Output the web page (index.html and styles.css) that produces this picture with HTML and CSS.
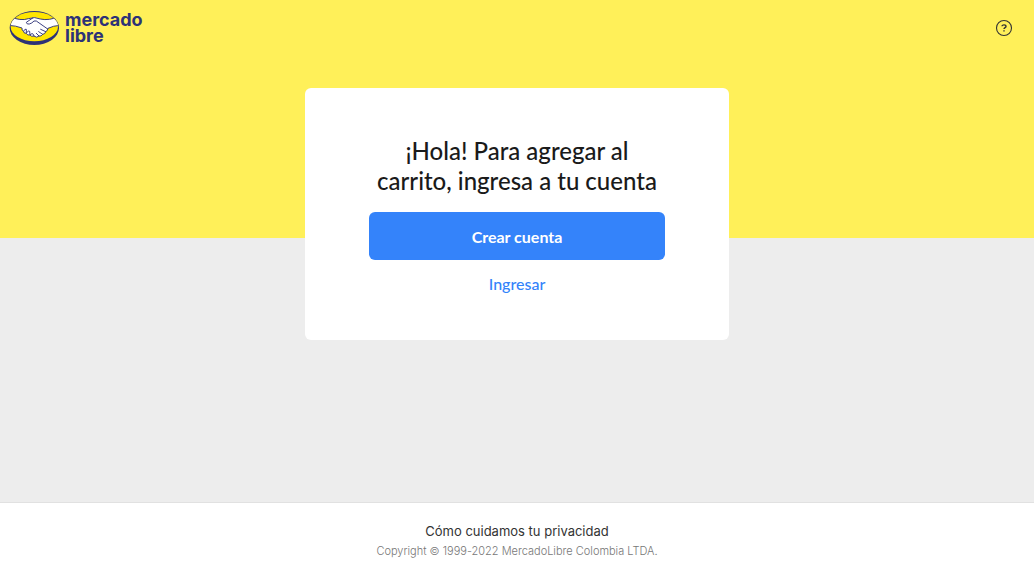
FILE: index.html
```html
<!DOCTYPE html>
<html lang="es">
<head>
<meta charset="utf-8">
<meta name="viewport" content="width=device-width, initial-scale=1">
<title>Mercado Libre</title>
<link rel="stylesheet" href="styles.css">
</head>
<body class="page">
<header class="header">
  <a class="brand" href="#">
    <svg class="brand-mark" viewBox="27 30 153 108" aria-hidden="true">
      <clipPath id="oval"><ellipse cx="103" cy="80" rx="71" ry="44"/></clipPath>
      <ellipse cx="103" cy="84" rx="74" ry="51" fill="#2d3277"/>
      <ellipse cx="103" cy="80" rx="71" ry="44" fill="#ffe600"/>
      <g clip-path="url(#oval)" stroke="#2d3277" stroke-width="2.8" stroke-linecap="round" stroke-linejoin="round">
        <path d="M30 50 Q62 64 85 56 Q104 49 121 57 Q148 63 176 49 L180 76 Q160 77 144 85 Q143 93 137 95 Q136 102 128 103 Q124 110 117 108 Q110 115 102 108 Q94 111 90 105 Q82 107 79 100 Q71 101 71 94 Q64 91 66 84 Q48 77 26 76Z" fill="#fff"/>
        <path d="M98 54 L79 67 Q80 74 88 72 Q96 70 102 63 L109 63 L143 87 M71 93 Q75 85 79 88 L79 99 Q86 90 89 94 L90 105 Q97 97 100 103 L102 108 M122 88 L137 95 M116 95 L128 103 M109 100 L117 108" fill="none"/>
      </g>
    </svg>
    <span class="brand-name">mercado<br>libre</span>
  </a>
  <a class="help" href="#" aria-label="Ayuda">
    <svg class="help-icon" viewBox="0 0 18 18" aria-hidden="true">
      <circle cx="9" cy="9" r="7.5" fill="none" stroke="currentColor" stroke-width="1.1"/>
      <path d="M7 7.3C7 5.4 11 5.4 11 7.4C11 8.7 9 8.6 9 10.1M9 11.3V12.6" fill="none" stroke="currentColor" stroke-width="1.4"/>
    </svg>
  </a>
</header>
<main class="main">
  <section class="card">
    <h1 class="title">¡Hola! Para agregar al carrito, ingresa a tu cuenta</h1>
    <button class="button" type="button">Crear cuenta</button>
    <a class="login" href="#">Ingresar</a>
  </section>
</main>
<footer class="footer">
  <a class="privacy" href="#">Cómo cuidamos tu privacidad</a>
  <small class="copyright">Copyright © 1999-2022 MercadoLibre Colombia LTDA.</small>
</footer>
</body>
</html>
```
FILE: styles.css
```css
*, *::before, *::after { box-sizing: border-box; }

.page {
  display: flex;
  flex-direction: column;
  min-height: 100vh;
  margin: 0;
  background: linear-gradient(#fff059 238px, #ededed 238px);
  font-family: Inter, "Liberation Sans", sans-serif;
}

a { text-decoration: none; }

.header {
  display: flex;
  align-items: center;
  justify-content: space-between;
  height: 56px;
  padding: 0 21px 0 9px;
}

.brand {
  display: flex;
  align-items: center;
  gap: 5px;
  color: #2d3277;
}

.brand-mark { width: 51px; height: 36px; }

.brand-name {
  font-size: 18px;
  font-weight: 700;
  line-height: 16px;
}

.help { display: flex; color: #333; }
.help-icon { width: 18px; height: 18px; }

.main {
  display: flex;
  flex: 1;
  align-items: flex-start;
  justify-content: center;
  padding: 32px 16px;
}

.card {
  display: flex;
  flex-direction: column;
  width: 100%;
  max-width: 424px;
  padding: 48px 64px 32px;
  border-radius: 6px;
  background: #fff;
  text-align: center;
}

.title {
  margin: 0 0 16px;
  color: #1a1a1a;
  font-family: Lato, "Liberation Sans", sans-serif;
  font-size: 24px;
  font-weight: 500;
  line-height: 30px;
}

.button {
  height: 48px;
  border: 0;
  border-radius: 6px;
  background: #3483fa;
  color: #fff;
  font: 700 16px/48px Lato, "Liberation Sans", sans-serif;
}

.login {
  color: #3483fa;
  font: 500 16px/48px Lato, "Liberation Sans", sans-serif;
}

.footer {
  display: flex;
  flex-direction: column;
  align-items: center;
  padding: 18px 16px 14px;
  border-top: 1px solid #e1e1e1;
  background: #fff;
}

.privacy { color: #333; font-size: 13px; font-weight: 400; line-height: 20px; }
.copyright { color: #777; font-size: 11px; font-weight: 300; line-height: 20px; }
```
